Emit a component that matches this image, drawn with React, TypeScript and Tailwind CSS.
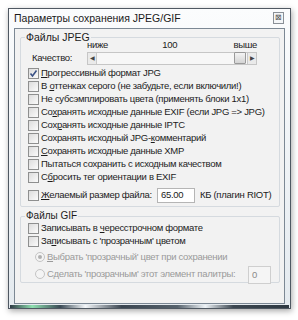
import React from "react";

const font = { fontFamily: '"Liberation Sans", Arial, sans-serif' };

const U = ({ children }: { children: React.ReactNode }) => <span className="underline underline-offset-[1px]">{children}</span>;

const Check = ({ checked = false }: { checked?: boolean }) => (
  <span className="flex h-[11px] w-[11px] shrink-0 items-center justify-center border border-[#8e8f8f] bg-gradient-to-br from-[#dcdcdc] to-[#fbfbfb]">
    {checked && (
      <svg width="9" height="9" viewBox="0 0 9 9">
        <path d="M1.5 4.5 L3.5 7 L7.5 1.5" fill="none" stroke="#3a5286" strokeWidth="1.6" />
      </svg>
    )}
  </span>
);

const Row = ({ checked, children }: { checked?: boolean; children: React.ReactNode }) => (
  <div className="flex h-[13px] items-center gap-[2px]">
    <Check checked={checked} />
    <span className="whitespace-nowrap">{children}</span>
  </div>
);

const Radio = ({ on = false, children }: { on?: boolean; children: React.ReactNode }) => (
  <div className="flex h-[14px] items-center gap-[2px] text-[#9a9a9a]">
    <span className="flex h-[10px] w-[10px] shrink-0 items-center justify-center rounded-full border border-[#c4c4c4] bg-[#f4f4f4]">
      {on && <span className="h-[4px] w-[4px] rounded-full bg-[#b0b0b0]" />}
    </span>
    <span className="whitespace-nowrap">{children}</span>
  </div>
);

export default function App() {
  return (
    <div className="h-[320px] w-[298px] bg-white pl-[8px] pt-[8px]" style={font}>
      <div className="flex h-[301px] w-[283px] flex-col border border-[#4f5862] bg-gradient-to-b from-[#fbfcfd] to-[#e4eaef] shadow-[1px_2px_6px_rgba(0,0,0,0.35)]">
        <div className="flex h-[19px] items-center justify-between pl-[5px] pr-[6px] text-[10.5px] leading-[12px] text-[#1a1a1a]">
          <span>Параметры сохранения JPEG/GIF</span>
          <span className="flex h-[12px] w-[11px] items-center justify-center border border-[#8a9097] bg-[#f4f6f8] text-[8px] leading-none text-[#555]">⊠</span>
        </div>
        <div className="mx-[5px] flex h-[277px] flex-col border border-[#7c8894] bg-[#f2f2f2] pl-[5px] pr-[4px] pt-[8px] text-[9.5px] leading-[12px] tracking-[-0.3px] text-[#1c1c1c]">
          <div className="relative h-[170px] rounded-[2px] border border-[#d5dadf] pl-[7px] pt-[1px]">
            <span className="absolute -top-[7px] left-[4px] bg-[#f2f2f2] px-[1px] text-[10.5px] tracking-normal">Файлы JPEG</span>
            <div className="flex items-end">
              <span className="w-[59px] pb-[1px] pl-[4px]">Качество:</span>
              <div className="flex w-[170px] flex-col">
                <div className="flex h-[12px] items-center justify-between">
                  <span>ниже</span>
                  <span className="-ml-[2px]">100</span>
                  <span>выше</span>
                </div>
                <div className="mt-[1px] flex h-[13px] items-center border border-[#c6c6c6] bg-[#f7f7f7]">
                  <span className="flex h-[11px] w-[9px] items-center justify-center border-r border-[#c9c9c9] bg-[#eaeaea] text-[6px] text-[#444]">◀</span>
                  <span className="flex-1" />
                  <span className="h-[12px] w-[12px] rounded-[1px] border border-[#9a9a9a] bg-gradient-to-b from-[#f4f4f4] to-[#d4d4d4]" />
                  <span className="ml-[1px] flex h-[11px] w-[9px] items-center justify-center border-l border-[#c9c9c9] bg-[#eaeaea] text-[6px] text-[#444]">▶</span>
                </div>
              </div>
            </div>
            <div className="mt-[2px] flex flex-col">
              <Row checked><U>П</U>рогрессивный формат JPG</Row>
              <Row>В <U>о</U>ттенках серого (не забудьте, если включили!)</Row>
              <Row>Не субсэмплировать цвета (применять блоки 1x1)</Row>
              <Row>Со<U>х</U>ранять исходные данные EXIF (если JPG =&gt; JPG)</Row>
              <Row>Сох<U>р</U>анять исходные данные IPTC</Row>
              <Row>Сохранять исходный JPG-<U>к</U>омментарий</Row>
              <Row><U>С</U>охранять исходные данные XMP</Row>
              <Row>Пытаться сохранить с исходным качеством</Row>
              <Row>С<U>б</U>росить тег ориентации в EXIF</Row>
            </div>
            <div className="mt-[4px] flex items-center">
              <Check />
              <span className="ml-[2px] w-[116px] whitespace-nowrap"><U>Ж</U>елаемый размер файла:</span>
              <span className="flex h-[15px] w-[38px] items-center border border-[#b5b5b5] bg-white pl-[3px]">65.00</span>
              <span className="ml-[5px] whitespace-nowrap">КБ (плагин RIOT)</span>
            </div>
          </div>
          <div className="relative mt-[9px] h-[67px] rounded-[2px] border border-[#d5dadf] pl-[7px] pt-[5px]">
            <span className="absolute -top-[7px] left-[4px] bg-[#f2f2f2] px-[1px] text-[10px] tracking-normal">Файлы GIF</span>
            <div className="flex flex-col">
              <Row>Записывать в <U>ч</U>ересстрочном формате</Row>
              <Row>За<U>п</U>исывать с 'прозрачным' цветом</Row>
            </div>
            <div className="mt-[2px] flex flex-col pl-[7px] pr-[8px]">
              <Radio on><U>В</U>ыбрать 'прозрачный' цвет при сохранении</Radio>
              <div className="flex items-center">
                <Radio>С<U>д</U>елать 'прозрачным' этот элемент палитры:</Radio>
                <span className="ml-auto mt-[2px] flex h-[18px] w-[23px] items-center border border-[#cfcfcf] bg-[#f5f5f5] pl-[3px] text-[#8a8a8a]">0</span>
              </div>
            </div>
          </div>
        </div>
        <div className="mx-[1px] mt-[1px] h-[3px] bg-[linear-gradient(90deg,#2d3a44_0%,#8fe0b0_8%,#3a4a55_18%,#f4f7fa_27%,#3a4550_40%,#56626c_60%,#eef3f7_70%,#3b4650_80%,#2e3942_100%)]" />
      </div>
    </div>
  );
}
